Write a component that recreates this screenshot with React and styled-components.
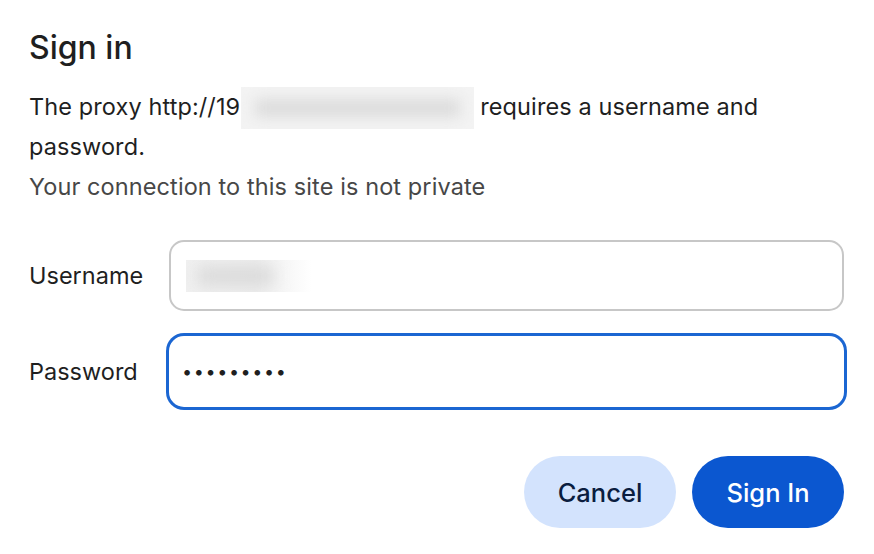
import React from "react";
import styled, { createGlobalStyle } from "styled-components";

const GlobalStyle = createGlobalStyle`
  html, body {
    margin: 0;
    padding: 0;
    background: #ffffff;
  }
  body {
    font-family: Inter, "Noto Sans", "Liberation Sans", sans-serif;
    color: #1f1f1f;
  }
`;

const Dialog = styled.div`
  width: 874px;
  height: 554px;
  box-sizing: border-box;
  padding: 28px 30px 0 29px;
  display: flex;
  flex-direction: column;
`;

const Title = styled.h1`
  margin: 0;
  font-size: 32px;
  line-height: 40px;
  font-weight: 500;
  color: #1f1f1f;
`;

const Message = styled.p`
  margin: ${(p) => (p.$first ? "19px 0 0" : "0")};
  font-size: 23.5px;
  line-height: 40px;
  letter-spacing: 0.1px;
  color: ${(p) => (p.$muted ? "#474747" : "#1f1f1f")};
  width: 760px;
`;

const Redacted = styled.span`
  display: inline-block;
  vertical-align: top;
  position: relative;
  top: 1px;
  width: 233px;
  height: 42px;
  margin: -1px 6px -1px 1px;
  background: #f3f3f3;
  overflow: hidden;

  &::after {
    content: "";
    position: absolute;
    left: 14px;
    right: 14px;
    top: 12px;
    bottom: 12px;
    background: #dcdcdc;
    filter: blur(7px);
  }
`;

const Form = styled.div`
  margin-top: 33px;
  display: grid;
  grid-template-columns: 140px 1fr;
  row-gap: 25px;
  align-items: center;
`;

const Label = styled.label`
  font-size: 23.5px;
  color: #1f1f1f;
`;

const Field = styled.div`
  height: 71px;
  box-sizing: border-box;
  border: 2px solid ${(p) => (p.$focused ? "#ffffff" : "#c7c7c7")};
  border-radius: 15px;
  box-shadow: ${(p) => (p.$focused ? "0 0 0 3px #1b66d2" : "none")};
  display: flex;
  align-items: center;
  padding: 0 8px;
  background: #ffffff;
`;

const BlurredValue = styled.span`
  width: 125px;
  height: 32px;
  margin-left: 7px;
  background: linear-gradient(90deg, #f0f0f0 0%, #ececec 55%, #ffffff 100%);
  position: relative;
  overflow: hidden;

  &::after {
    content: "";
    position: absolute;
    left: 12px;
    width: 75px;
    top: 8px;
    bottom: 8px;
    background: #d8d8d8;
    filter: blur(8px);
  }
`;

const Dots = styled.span`
  font-size: 18px;
  letter-spacing: 1.6px;
  color: #1f1f1f;
  padding-left: 3px;
`;

const Actions = styled.div`
  margin-top: 49px;
  display: flex;
  justify-content: flex-end;
  gap: 16px;
`;

const Button = styled.button`
  width: 152px;
  height: 72px;
  border: none;
  border-radius: 36px;
  font-family: Inter, "Noto Sans", "Liberation Sans", sans-serif;
  font-size: 25.5px;
  font-weight: 500;
  background: ${(p) => (p.$primary ? "#0b57d0" : "#d3e3fd")};
  color: ${(p) => (p.$primary ? "#ffffff" : "#0a1d3f")};
  cursor: pointer;
`;

export default function App() {
  return (
    <>
      <GlobalStyle />
      <Dialog>
        <Title>Sign in</Title>
        <Message $first>
          The proxy http://19<Redacted />requires a username and password.
        </Message>
        <Message $muted>Your connection to this site is not private</Message>
        <Form>
          <Label>Username</Label>
          <Field>
            <BlurredValue />
          </Field>
          <Label>Password</Label>
          <Field $focused>
            <Dots>•••••••••</Dots>
          </Field>
        </Form>
        <Actions>
          <Button>Cancel</Button>
          <Button $primary>Sign In</Button>
        </Actions>
      </Dialog>
    </>
  );
}
